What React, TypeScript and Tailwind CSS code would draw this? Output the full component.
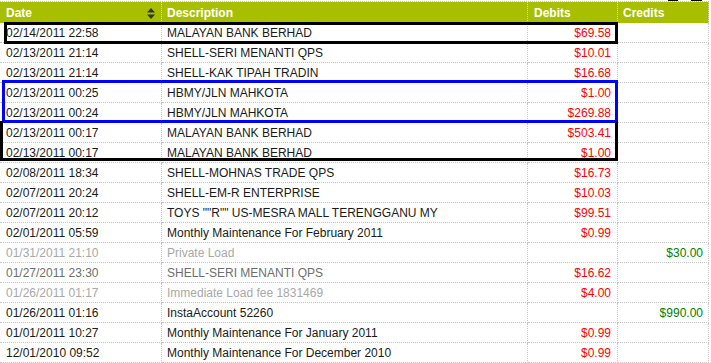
import React from 'react';

type Row = {
  date: string;
  desc: string;
  debit?: string;
  credit?: string;
  tone?: 'normal' | 'muted' | 'faint';
};

const rows: Row[] = [
  { date: '02/14/2011 22:58', desc: 'MALAYAN BANK BERHAD', debit: '$69.58' },
  { date: '02/13/2011 21:14', desc: 'SHELL-SERI MENANTI QPS', debit: '$10.01' },
  { date: '02/13/2011 21:14', desc: 'SHELL-KAK TIPAH TRADIN', debit: '$16.68' },
  { date: '02/13/2011 00:25', desc: 'HBMY/JLN MAHKOTA', debit: '$1.00' },
  { date: '02/13/2011 00:24', desc: 'HBMY/JLN MAHKOTA', debit: '$269.88' },
  { date: '02/13/2011 00:17', desc: 'MALAYAN BANK BERHAD', debit: '$503.41' },
  { date: '02/13/2011 00:17', desc: 'MALAYAN BANK BERHAD', debit: '$1.00' },
  { date: '02/08/2011 18:34', desc: 'SHELL-MOHNAS TRADE QPS', debit: '$16.73' },
  { date: '02/07/2011 20:24', desc: 'SHELL-EM-R ENTERPRISE', debit: '$10.03' },
  { date: '02/07/2011 20:12', desc: 'TOYS ""R"" US-MESRA MALL TERENGGANU MY', debit: '$99.51' },
  { date: '02/01/2011 05:59', desc: 'Monthly Maintenance For February 2011', debit: '$0.99' },
  { date: '01/31/2011 21:10', desc: 'Private Load', credit: '$30.00', tone: 'faint' },
  { date: '01/27/2011 23:30', desc: 'SHELL-SERI MENANTI QPS', debit: '$16.62', tone: 'muted' },
  { date: '01/26/2011 01:17', desc: 'Immediate Load fee 1831469', debit: '$4.00', tone: 'faint' },
  { date: '01/26/2011 01:16', desc: 'InstaAccount 52260', credit: '$990.00' },
  { date: '01/01/2011 10:27', desc: 'Monthly Maintenance For January 2011', debit: '$0.99' },
  { date: '12/01/2010 09:52', desc: 'Monthly Maintenance For December 2010', debit: '$0.99' },
];

const toneClass = {
  normal: 'text-[#1a1a1a]',
  muted: 'text-[#6e6e6e]',
  faint: 'text-[#a8a8a8]',
};

const cell = 'h-[20px] flex items-center border-r border-b border-dotted border-[#c4c4c4] whitespace-nowrap overflow-hidden';
const head = 'h-[21px] flex items-center border-r border-dotted border-[#d8e0a8] text-white font-bold';

export default function App() {
  return (
    <div
      className="relative w-[711px] h-[363px] overflow-hidden bg-white text-[12px] leading-none"
      style={{ fontFamily: '"Liberation Sans", Arial, sans-serif' }}
    >
      {/* marks at the very top edge */}
      <div className="absolute top-0 left-[668px] w-[10px] h-[1px] bg-black" />
      <div className="absolute top-0 left-[691px] w-[11px] h-[1px] bg-black" />

      <div className="pt-[1px]">
        <div className="w-[709px] border-t border-dotted border-[#c4c4c4]">
          {/* header */}
          <div className="grid grid-cols-[162px_366px_90px_91px] bg-[#a8bf00]">
            <div className={`${head} pl-[6px] pr-[6px] justify-between`}>
              <span>Date</span>
              <svg width="8" height="11" viewBox="0 0 8 11" className="mt-[1px]">
                <path d="M4 0 L8 4.5 L0 4.5 Z" fill="#2f3a10" />
                <path d="M0 6.5 L8 6.5 L4 11 Z" fill="#2f3a10" />
              </svg>
            </div>
            <div className={`${head} pl-[5px]`}>Description</div>
            <div className={`${head} pl-[6px]`}>Debits</div>
            <div className={`${head} pl-[5px]`}>Credits</div>
          </div>

          {/* rows */}
          <div className="grid grid-cols-[162px_366px_90px_91px]">
            {rows.map((r, i) => {
              const tone = toneClass[r.tone || 'normal'];
              return (
                <React.Fragment key={i}>
                  <div className={`${cell} ${tone} pl-[6px]`}>{r.date}</div>
                  <div className={`${cell} ${tone} pl-[5px]`}>{r.desc}</div>
                  <div className={`${cell} justify-end pr-[6px] text-[#ff0000]`}>{r.debit}</div>
                  <div className={`${cell} justify-end pr-[5px] text-[#008000]`}>{r.credit}</div>
                </React.Fragment>
              );
            })}
          </div>
        </div>
      </div>

      {/* highlight boxes drawn over the table */}
      <div className="absolute left-[4px] top-[22px] w-[614px] h-[22px] border-[3px] border-black" />
      <div className="absolute left-[2px] top-[80px] w-[616px] h-[43px] border-[3px] border-[#0000ff]" />
      <div className="absolute left-0 top-[121px] w-[618px] h-[40px] border-[3px] border-black border-t-0" />
    </div>
  );
}
